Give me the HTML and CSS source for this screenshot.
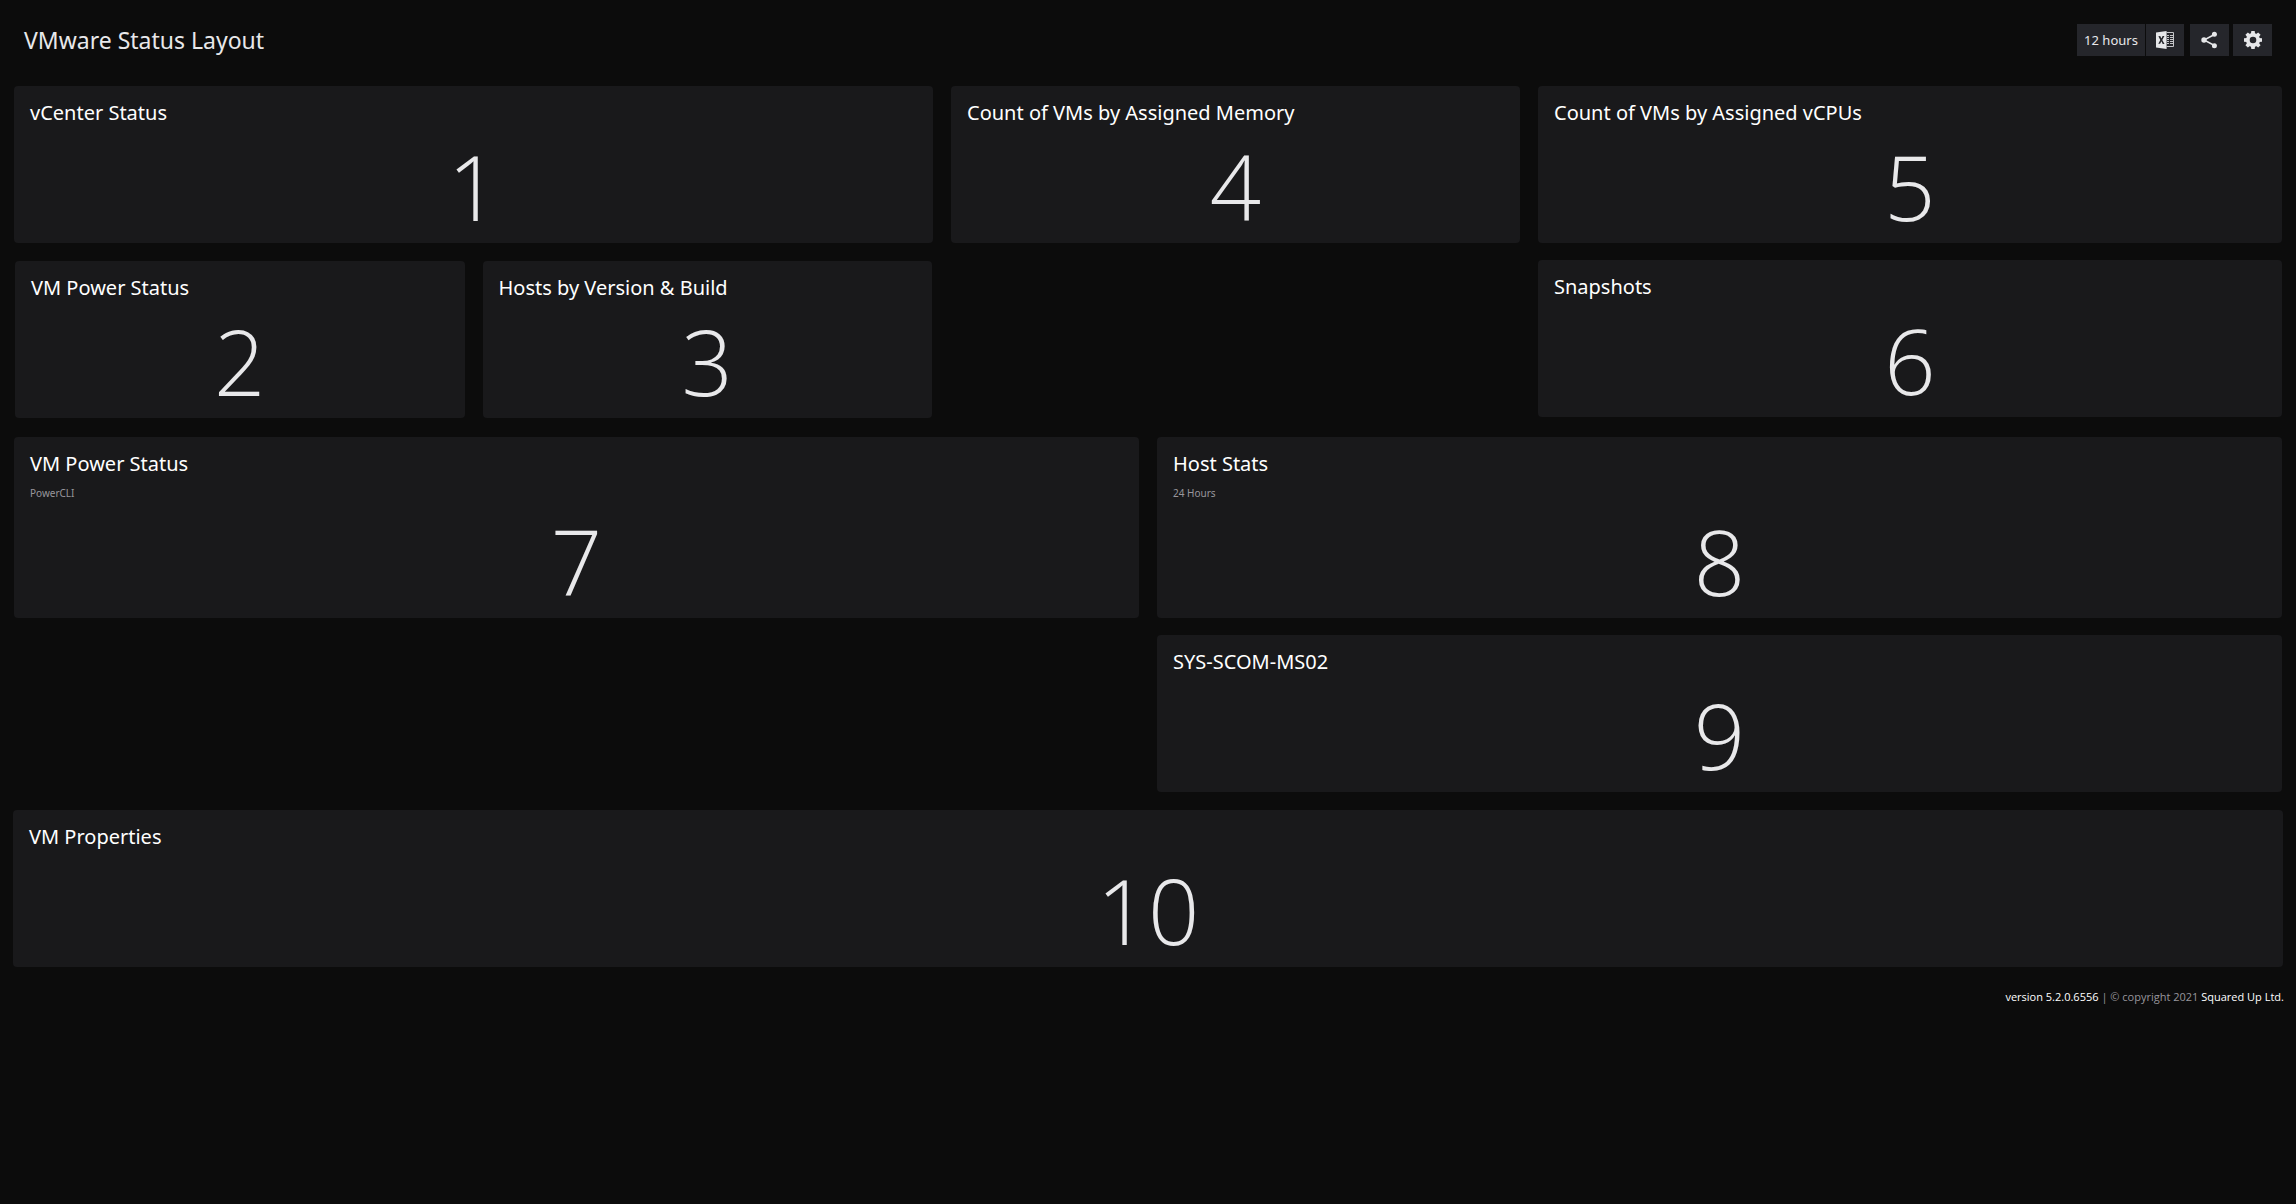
FILE: index.html
```html
<!DOCTYPE html>
<html lang="en">
<head>
<meta charset="utf-8">
<meta name="viewport" content="width=device-width, initial-scale=1">
<title>VMware Status Layout</title>
<link rel="stylesheet" href="styles.css">
</head>
<body>
<header class="topbar">
  <h1 class="page-title">VMware Status Layout</h1>
  <div class="toolbar">
    <div class="tool-group">
      <button class="tool tool-time" type="button">12 hours</button>
      <button class="tool" type="button" aria-label="Export to Excel">
        <svg class="icon" viewBox="0 0 18 18" aria-hidden="true">
          <path fill="#e6e7e9" fill-rule="evenodd" d="M0 1.6 10.6 0v18L0 16.4zM2.4 5.2l1.9 3.8-2 3.8h1.8l1.3-2.6 1.3 2.7 1.8.1-2.2-4.1 2.1-4-1.8.1-1.2 2.6-1.2-2.5z"/>
          <path fill="none" stroke="#c4c5c8" d="M10.5 1.5h7v14h-7"/>
          <path stroke="#c4c5c8" d="M11 4.5h2m1 0h3M11 6.500h2m1 0h3M11 8.500h2m1 0h3M11 10.500h2m1 0h3M11 12.500h2m1 0h3"/>
        </svg>
      </button>
    </div>
    <button class="tool" type="button" aria-label="Share">
      <svg class="icon" viewBox="0 0 18 18" aria-hidden="true">
        <path fill="none" stroke="#e6e7e9" stroke-width="1.500" d="M13.500 3.500 3 9 13.500 14.500"/>
        <circle cx="13.400" cy="3.200" r="2.500" fill="#e6e7e9"/>
        <circle cx="3" cy="9" r="2.700" fill="#e6e7e9"/>
        <circle cx="13.400" cy="14.800" r="2.500" fill="#e6e7e9"/>
      </svg>
    </button>
    <button class="tool" type="button" aria-label="Settings">
      <svg class="icon" viewBox="0 0 18 18" aria-hidden="true">
        <g fill="#e6e7e9">
          <path fill-rule="evenodd" d="M9 2a7 7 0 1 1 0 14A7 7 0 0 1 9 2zm0 3.700a3.300 3.300 0 1 0 0 6.600 3.300 3.300 0 0 0 0-6.600z"/>
          <path id="tooth" d="M6.900 3 7.300 0h3.400l.4 3z"/>
          <use href="#tooth" transform="rotate(45 9 9)"/>
          <use href="#tooth" transform="rotate(90 9 9)"/>
          <use href="#tooth" transform="rotate(135 9 9)"/>
          <use href="#tooth" transform="rotate(180 9 9)"/>
          <use href="#tooth" transform="rotate(225 9 9)"/>
          <use href="#tooth" transform="rotate(270 9 9)"/>
          <use href="#tooth" transform="rotate(315 9 9)"/>
        </g>
      </svg>
    </button>
  </div>
</header>

<main class="dashboard">
  <div class="row row-thirds">
    <div class="column">
      <section class="card"><h2 class="card-title">vCenter Status</h2><p class="value">1</p></section>
      <div class="split">
        <section class="card"><h2 class="card-title">VM Power Status</h2><p class="value">2</p></section>
        <section class="card"><h2 class="card-title">Hosts by Version &amp; Build</h2><p class="value">3</p></section>
      </div>
    </div>
    <div class="column">
      <section class="card"><h2 class="card-title">Count of VMs by Assigned Memory</h2><p class="value">4</p></section>
    </div>
    <div class="column">
      <section class="card"><h2 class="card-title">Count of VMs by Assigned vCPUs</h2><p class="value">5</p></section>
      <section class="card"><h2 class="card-title">Snapshots</h2><p class="value">6</p></section>
    </div>
  </div>
  <div class="row row-halves">
    <div class="column">
      <section class="card"><h2 class="card-title">VM Power Status</h2><p class="card-subtitle">PowerCLI</p><p class="value">7</p></section>
    </div>
    <div class="column">
      <section class="card"><h2 class="card-title">Host Stats</h2><p class="card-subtitle">24 Hours</p><p class="value">8</p></section>
      <section class="card"><h2 class="card-title">SYS-SCOM-MS02</h2><p class="value">9</p></section>
    </div>
  </div>
  <section class="card"><h2 class="card-title">VM Properties</h2><p class="value">10</p></section>
</main>

<footer class="footer"><a href="#version">version 5.2.0.6556</a> | © copyright 2021 <a href="#company">Squared Up Ltd.</a></footer>
</body>
</html>
```
FILE: styles.css
```css
* { box-sizing: border-box; }

body {
  margin: 0;
  min-height: 100vh;
  background: #0c0c0c;
  color: #e8e8ea;
  font-family: "Noto Sans", "Open Sans", sans-serif;
}

h1, h2, p { margin: 0; font-weight: 400; }

.topbar {
  display: flex;
  align-items: center;
  justify-content: space-between;
  height: 80px;
  padding: 0 24px;
}

.page-title { font-size: 23px; line-height: 32px; }

.toolbar { display: flex; gap: 4px; }
.tool-group { display: flex; gap: 1px; margin-right: 2px; }

.tool {
  display: flex;
  align-items: center;
  justify-content: center;
  width: 39px;
  height: 32px;
  padding: 0;
  border: 0;
  background: #25262b;
  color: #e8e8ea;
  font: inherit;
  font-size: 13px;
}
.tool-group .tool { width: 38px; }
.tool-group .tool-time { width: 68px; }
.icon { display: block; width: 18px; height: 18px; }

.dashboard {
  display: flex;
  flex-direction: column;
  gap: 18px;
  padding: 6px 13px 0;
}

.row { display: grid; gap: 18px; padding: 0 1px; }
.row-thirds { grid-template-columns: 919fr 569fr 744fr; }
.row-halves { grid-template-columns: 1fr 1fr; }
.column { display: flex; flex-direction: column; gap: 17px; min-width: 0; }
.split { display: grid; grid-template-columns: 1fr 1fr; gap: 18px; padding: 1px; }

.card {
  padding: 12px 16px 5px;
  border-radius: 4px;
  background: #19191b;
}
.card-title { color: #fff; font-size: 20px; line-height: 30px; }
.card-subtitle { padding-top: 4px; color: #98969c; font-size: 10px; line-height: 20px; }
.value {
  padding-top: 6px;
  font-family: "Open Sans", "Noto Sans", sans-serif;
  font-size: 90px;
  font-weight: 300;
  line-height: 104px;
  text-align: center;
}

.footer {
  padding: 21px 12px;
  color: #98969c;
  font-family: "Open Sans", "Noto Sans", sans-serif;
  font-size: 11px;
  line-height: 18px;
  text-align: right;
}
.footer a { color: #fff; text-decoration: none; }
```
